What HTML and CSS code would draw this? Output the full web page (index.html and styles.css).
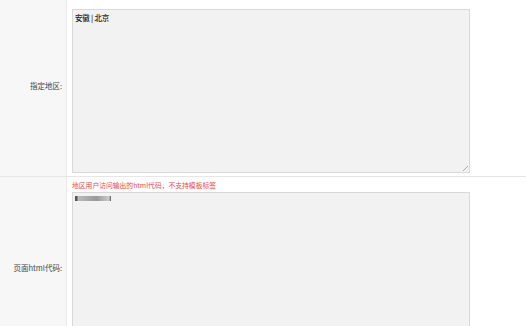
FILE: index.html
```html
<!DOCTYPE html>
<html lang="zh-CN">

<head>
    <meta charset="UTF-8">
    <meta name="viewport" content="width=device-width, initial-scale=1.0">
    <title>地区设置</title>
    <link rel="stylesheet" href="styles.css">
</head>

<body>
    <table class="form-table">
        <tr class="row-first">
            <th>指定地区:</th>
            <td>
                <div class="area-box">安徽 | 北京</div>
            </td>
        </tr>
        <tr class="row-second">
            <th>页面html代码:</th>
            <td>
                <p class="tip">地区用户访问输出的html代码，不支持模板标签</p>
                <div class="area-box code-box"><span class="mask"></span></div>
            </td>
        </tr>
    </table>
</body>

</html>
```

FILE: styles.css
```css
body {
    margin: 0;
    background-color: #fff;
    font-family: "Noto Sans CJK SC", "Liberation Sans", sans-serif;
    font-size: 7px;
    color: #333;
}

.form-table {
    border-collapse: collapse;
    width: 100%;
}

.form-table th {
    width: 62px;
    padding: 0 4px 0 0;
    background-color: #f7f7f7;
    border-right: 1px solid #ebebeb;
    text-align: right;
    font-weight: normal;
    font-size: 7.5px;
    color: #444;
    vertical-align: middle;
}

.form-table td {
    padding: 0 0 0 5px;
    vertical-align: top;
}

.row-first th,
.row-first td {
    border-bottom: 1px solid #e6e6e6;
}

.row-first td {
    padding-top: 9px;
    padding-bottom: 3px;
}

.row-first th {
    padding-bottom: 6px;
}

.area-box {
    width: 392px;
    height: 158px;
    padding: 2px 2px;
    background-color: #f2f2f2;
    border: 1px solid #d9d9d9;
    font-size: 7.5px;
    font-weight: 500;
    color: #222;
    letter-spacing: -0.2px;
    position: relative;
}

.area-box::after {
    content: "";
    position: absolute;
    right: 1px;
    bottom: 1px;
    width: 5px;
    height: 5px;
    background: linear-gradient(135deg, transparent 45%, #aaa 46%, #aaa 54%, transparent 55%, transparent 70%, #aaa 71%, #aaa 79%, transparent 80%);
}

.tip {
    margin: 0;
    padding-top: 3px;
    height: 12px;
    line-height: 10px;
    font-size: 6.8px;
    color: #e8484a;
}

.row-second td {
    padding-bottom: 10px;
}

.row-second th {
    padding-bottom: 0;
}

.code-box {
    height: 150px;
}

.code-box::after {
    display: none;
}

.mask {
    display: block;
    margin-top: 1px;
    width: 36px;
    height: 5px;
    background: linear-gradient(90deg, #555 0, #555 2px, #bbb 3px, #999 60%, #ccc 95%, #444 100%);
}
```
